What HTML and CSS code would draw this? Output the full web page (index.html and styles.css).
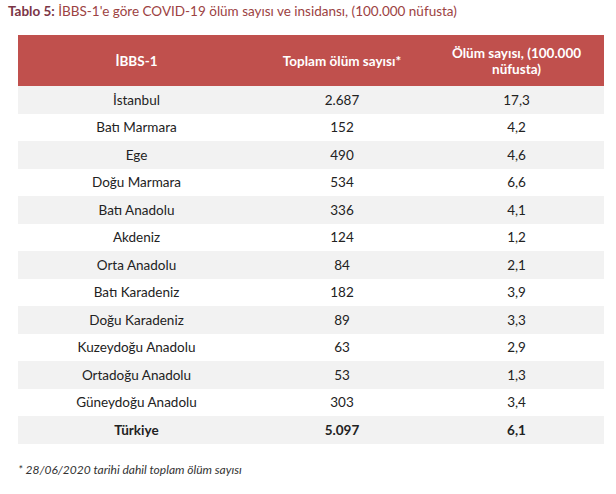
FILE: index.html
```html
<!DOCTYPE html>
<html lang="tr">
<head>
<meta charset="utf-8">
<link rel="stylesheet" href="styles.css">
</head>
<body>
<div class="page">
  <p class="title"><b>Tablo 5:</b> İBBS-1'e göre COVID-19 ölüm sayısı ve insidansı, (100.000 nüfusta)</p>
  <table class="data">
    <thead>
      <tr><th>İBBS-1</th><th>Toplam ölüm sayısı*</th><th>Ölüm sayısı, (100.000<br>nüfusta)</th></tr>
    </thead>
    <tbody>
      <tr><td>İstanbul</td><td>2.687</td><td>17,3</td></tr>
      <tr><td>Batı Marmara</td><td>152</td><td>4,2</td></tr>
      <tr><td>Ege</td><td>490</td><td>4,6</td></tr>
      <tr><td>Doğu Marmara</td><td>534</td><td>6,6</td></tr>
      <tr><td>Batı Anadolu</td><td>336</td><td>4,1</td></tr>
      <tr><td>Akdeniz</td><td>124</td><td>1,2</td></tr>
      <tr><td>Orta Anadolu</td><td>84</td><td>2,1</td></tr>
      <tr><td>Batı Karadeniz</td><td>182</td><td>3,9</td></tr>
      <tr><td>Doğu Karadeniz</td><td>89</td><td>3,3</td></tr>
      <tr><td>Kuzeydoğu Anadolu</td><td>63</td><td>2,9</td></tr>
      <tr><td>Ortadoğu Anadolu</td><td>53</td><td>1,3</td></tr>
      <tr><td>Güneydoğu Anadolu</td><td>303</td><td>3,4</td></tr>
      <tr class="total"><td>Türkiye</td><td>5.097</td><td>6,1</td></tr>
    </tbody>
  </table>
  <p class="note">* 28/06/2020 tarihi dahil toplam ölüm sayısı</p>
</div>
</body>
</html>
```
FILE: styles.css
```css
html, body { margin: 0; padding: 0; background: #fff; }
body { font-family: Lato, "Open Sans", sans-serif; color: #222; }
.page { padding: 2px 12px 0 18px; }
.title { margin: 0 0 0 -10px; font-size: 13.5px; color: #9c4242; line-height: 18px; }
.title b { color: #7b3546; }
.data { margin-top: 15px; width: 586px; border-collapse: collapse; font-size: 13.5px; }
.data th { background: #c0504d; color: #fff; font-weight: bold; height: 51px; padding: 0; line-height: 16px; }
.data th:nth-child(1) { width: 237px; }
.data th:nth-child(2) { width: 174px; }
.data td { text-align: center; height: 27.5px; padding: 0; }
.data tbody tr:nth-child(odd) td { background: #f2f2f2; }
.data .total td { font-weight: bold; }
.note { margin: 18px 0 0 0; font-size: 12px; font-style: italic; color: #333; }
```
